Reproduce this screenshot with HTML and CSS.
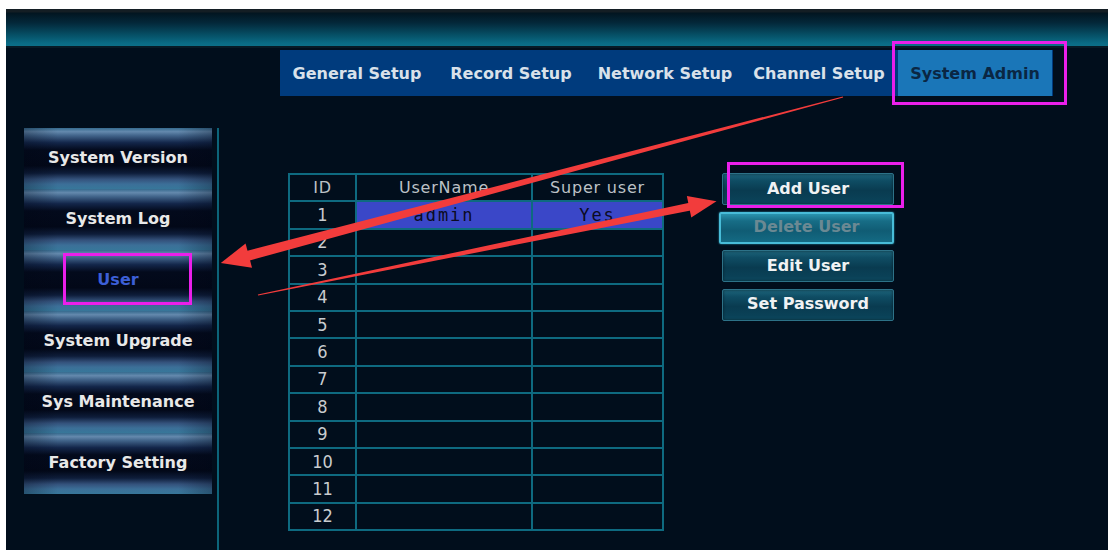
FILE: index.html
```html
<!DOCTYPE html>
<html lang="en">
<head>
<meta charset="utf-8">
<title>System Admin - User</title>
<link rel="stylesheet" href="styles.css">
</head>
<body>
<div class="screen">
  <div class="topbar"></div>

  <nav class="tabs">
    <div class="tab">General Setup</div>
    <div class="tab">Record Setup</div>
    <div class="tab">Network Setup</div>
    <div class="tab">Channel Setup</div>
    <div class="tab tab-active">System Admin<span class="mark mark-tab"></span></div>
  </nav>

  <div class="main">
    <ul class="side">
      <li class="side-item">System Version</li>
      <li class="side-item">System Log</li>
      <li class="side-item side-current">User<span class="mark mark-user"></span></li>
      <li class="side-item">System Upgrade</li>
      <li class="side-item">Sys Maintenance</li>
      <li class="side-item">Factory Setting</li>
    </ul>

    <div class="divider"></div>

    <div class="content">
      <table class="users">
        <thead>
          <tr><th class="c-id">ID</th><th class="c-name">UserName</th><th class="c-super">Super user</th></tr>
        </thead>
        <tbody>
          <tr class="row-sel"><td class="num">1</td><td class="val">admin</td><td class="val">Yes</td></tr>
          <tr><td class="num">2</td><td></td><td></td></tr>
          <tr><td class="num">3</td><td></td><td></td></tr>
          <tr><td class="num">4</td><td></td><td></td></tr>
          <tr><td class="num">5</td><td></td><td></td></tr>
          <tr><td class="num">6</td><td></td><td></td></tr>
          <tr><td class="num">7</td><td></td><td></td></tr>
          <tr><td class="num">8</td><td></td><td></td></tr>
          <tr><td class="num">9</td><td></td><td></td></tr>
          <tr><td class="num">10</td><td></td><td></td></tr>
          <tr><td class="num">11</td><td></td><td></td></tr>
          <tr><td class="num">12</td><td></td><td></td></tr>
        </tbody>
      </table>

      <div class="actions">
        <button class="btn">Add User<span class="mark mark-add"></span></button>
        <button class="btn btn-disabled">Delete User</button>
        <button class="btn">Edit User</button>
        <button class="btn">Set Password</button>
      </div>
    </div>
  </div>
</div>

<!-- red callout arrows drawn over the screen -->
<svg class="arrows" width="1109" height="551" viewBox="0 0 1109 551" aria-hidden="true">
  <g fill="#f23c3c" transform="translate(843 97) rotate(165.06)">
    <polygon points="0,-0.6 620,-5 620,5 0,0.6"/>
    <polygon points="615,-12.5 644,0 615,12.5"/>
  </g>
  <g fill="#f23c3c" transform="translate(258 295) rotate(-11.57)">
    <polygon points="0,-0.5 446,-4 446,4 0,0.5"/>
    <polygon points="440,-11 468,0 440,11"/>
  </g>
</svg>
</body>
</html>
```

FILE: styles.css
```css
html, body {
  margin: 0;
  padding: 0;
}

body {
  position: relative;
  width: 1109px;
  height: 551px;
  overflow: hidden;
  background: #ffffff;
  box-sizing: border-box;
  padding: 9px 1px 1px 6px;
  font-family: "DejaVu Sans", Verdana, sans-serif;
}

.screen {
  width: 1102px;
  height: 541px;
  background: #010e1c;
  display: flex;
  flex-direction: column;
}

/* title strip */
.topbar {
  height: 37px;
  flex: none;
  border-bottom: 2px solid #071a26;
  background: linear-gradient(to bottom,
    #141e24 0px, #141e24 3px,
    #021520 4px, #03283a 14px,
    #065066 26px, #0a6a84 34px, #0c6f88 37px);
}

/* top tab strip */
.tabs {
  display: flex;
  flex: none;
  margin: 2px 0 0 274px;
  width: 773px;
  height: 46px;
  background: #003b7d;
}

.tab {
  width: 154px;
  flex: none;
  display: flex;
  align-items: center;
  justify-content: center;
  color: #d9e1ea;
  font-size: 16px;
  font-weight: bold;
  white-space: nowrap;
}

.tab-active {
  position: relative;
  margin-left: 2px;
  background: #1a76b8;
  color: #0a2643;
}

/* magenta highlight frames */
.mark {
  position: absolute;
  border: 3px solid #ea1fea;
  box-sizing: border-box;
  pointer-events: none;
}

.mark-tab {
  left: -6px;
  top: -9px;
  width: 175px;
  height: 64px;
}

.mark-user {
  left: 39px;
  top: 3px;
  width: 129px;
  height: 52px;
}

.mark-add {
  left: 4px;
  top: -12px;
  width: 177px;
  height: 46px;
}

/* lower area */
.main {
  flex: 1;
  display: flex;
  margin-top: 32px;
}

.side {
  list-style: none;
  margin: 0 0 0 18px;
  padding: 0;
  width: 188px;
  align-self: flex-start;
}

.side-item {
  position: relative;
  height: 61px;
  display: flex;
  align-items: center;
  justify-content: center;
  padding-bottom: 3px;
  box-sizing: border-box;
  color: #e8e8e8;
  font-size: 16px;
  font-weight: bold;
  white-space: nowrap;
  background:
    linear-gradient(to right, rgba(0, 6, 20, 0.3), rgba(0, 6, 20, 0) 18%, rgba(0, 6, 20, 0) 82%, rgba(0, 6, 20, 0.3)),
    linear-gradient(to bottom,
      #356a8e 0%, #6489ad 6%, #43668c 12%, #13264a 24%,
      #030a1c 36%, #020818 62%, #0e1d3a 74%,
      #34527c 84%, #3c6f98 92%, #37779a 100%);
}

.side-current {
  color: #3c5fd6;
}

.divider {
  width: 2px;
  flex: none;
  margin-left: 5px;
  background: #0c6479;
}

.content {
  display: flex;
  align-items: flex-start;
  margin-left: 69px;
  padding-top: 45px;
}

/* user list */
.users {
  border-collapse: separate;
  border-spacing: 0;
  table-layout: fixed;
  border-top: 2px solid #0e6a80;
  border-left: 2px solid #0e6a80;
}

.users th,
.users td {
  height: 25.4px;
  padding: 0;
  border-right: 2px solid #0e6a80;
  border-bottom: 2px solid #0e6a80;
  text-align: center;
  vertical-align: middle;
  white-space: nowrap;
  line-height: 1;
}

.c-id { width: 65px; }
.c-name { width: 174px; }
.c-super { width: 129px; }

.users th {
  color: #bcc1c6;
  font-size: 16px;
  font-weight: normal;
  letter-spacing: 0.8px;
}

.num {
  color: #c9cccf;
  font-size: 18px;
  font-stretch: condensed;
}

.row-sel .val {
  background: #3a47c8;
  color: #0b0b22;
  font-family: "DejaVu Sans Mono", "Liberation Mono", monospace;
  font-size: 17px;
  letter-spacing: 2px;
}

/* action buttons */
.actions {
  display: flex;
  flex-direction: column;
  gap: 6.5px;
  margin-left: 58px;
}

.btn {
  position: relative;
  width: 172px;
  height: 32px;
  margin: 0;
  padding: 0 0 2px;
  border: 1px solid #2d7288;
  border-radius: 2px;
  background: linear-gradient(to bottom,
    #1d647b 0%, #0f4d64 22%, #093b50 55%, #0a4157 85%, #0d4a60 100%);
  box-shadow: inset 0 0 3px rgba(0, 0, 0, 0.55);
  color: #f0f2f3;
  font-family: "DejaVu Sans", Verdana, sans-serif;
  font-size: 16px;
  font-weight: bold;
  white-space: nowrap;
}

.btn-disabled {
  margin-left: -3px;
  width: 175px;
  border: 2px solid #48bcd8;
  background: linear-gradient(to bottom,
    #2a93ae 0%, #176d86 25%, #105c74 60%, #146a83 100%);
  box-shadow: 0 0 2px #2f9fbb;
  color: #6b8993;
}

/* callout layer */
.arrows {
  position: absolute;
  left: 0;
  top: 0;
  pointer-events: none;
}
```
